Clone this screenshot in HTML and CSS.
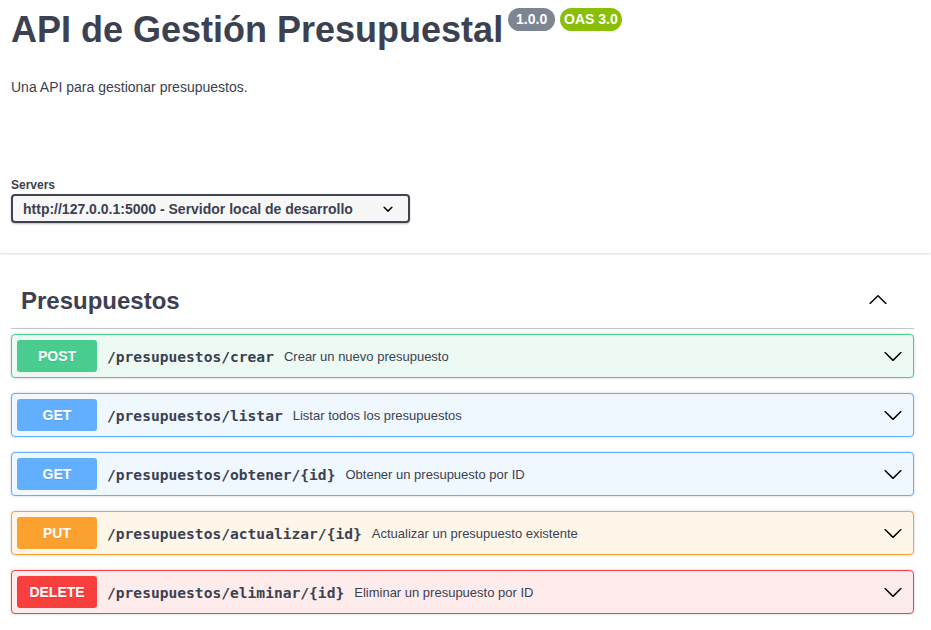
FILE: index.html
```html
<!DOCTYPE html>
<html lang="es">
<head>
<meta charset="utf-8">
<title>API de Gestión Presupuestal</title>
<link rel="stylesheet" href="styles.css">
</head>
<body>
<div class="wrapper info">
  <div class="title-row">
    <h2 class="title">API de Gestión Presupuestal</h2>
    <span class="badge badge-version"> 1.0.0 </span>
    <span class="badge badge-oas">OAS 3.0</span>
  </div>
  <p class="desc">Una API para gestionar presupuestos.</p>
</div>

<div class="scheme">
  <div class="wrapper">
    <div class="servers-label">Servers</div>
    <div class="select">
      <span class="select-text">http://127.0.0.1:5000 - Servidor local de desarrollo</span>
      <svg class="select-arrow" width="20" height="20" viewBox="0 0 20 20"><path d="M13.418 7.859a.695.695 0 01.978 0 .68.68 0 010 .969l-3.908 3.83a.697.697 0 01-.979 0l-3.908-3.83a.68.68 0 010-.969.695.695 0 01.978 0L10 11l3.418-3.141z"/></svg>
    </div>
  </div>
</div>

<div class="wrapper section">
  <div class="tag">
    <h3 class="tag-title">Presupuestos</h3>
    <svg class="tag-arrow" width="20" height="20" viewBox="0 0 20 20"><path d="M17.418 14.908c.287.27.75.27 1.037 0 .286-.27.286-.71 0-.98L10.51 6.203c-.286-.27-.75-.27-1.037 0L1.546 13.928c-.286.27-.286.71 0 .98s.75.27 1.037 0L10 7.83l7.418 7.078z"/></svg>
  </div>

  <div class="opblock post">
    <span class="method">POST</span>
    <span class="path">/presupuestos/crear</span>
    <span class="summary">Crear un nuevo presupuesto</span>
    <svg class="op-arrow" width="20" height="20" viewBox="0 0 20 20"><path d="M17.418 6.109c.272-.268.709-.268.979 0s.271.701 0 .969l-7.908 7.83c-.27.268-.707.268-.979 0l-7.908-7.83c-.27-.268-.27-.701 0-.969.271-.268.709-.268.979 0L10 13.25l7.418-7.141z"/></svg>
  </div>

  <div class="opblock get">
    <span class="method">GET</span>
    <span class="path">/presupuestos/listar</span>
    <span class="summary">Listar todos los presupuestos</span>
    <svg class="op-arrow" width="20" height="20" viewBox="0 0 20 20"><path d="M17.418 6.109c.272-.268.709-.268.979 0s.271.701 0 .969l-7.908 7.83c-.27.268-.707.268-.979 0l-7.908-7.83c-.27-.268-.27-.701 0-.969.271-.268.709-.268.979 0L10 13.25l7.418-7.141z"/></svg>
  </div>

  <div class="opblock get">
    <span class="method">GET</span>
    <span class="path">/presupuestos/obtener/{id}</span>
    <span class="summary">Obtener un presupuesto por ID</span>
    <svg class="op-arrow" width="20" height="20" viewBox="0 0 20 20"><path d="M17.418 6.109c.272-.268.709-.268.979 0s.271.701 0 .969l-7.908 7.83c-.27.268-.707.268-.979 0l-7.908-7.83c-.27-.268-.27-.701 0-.969.271-.268.709-.268.979 0L10 13.25l7.418-7.141z"/></svg>
  </div>

  <div class="opblock put">
    <span class="method">PUT</span>
    <span class="path">/presupuestos/actualizar/{id}</span>
    <span class="summary">Actualizar un presupuesto existente</span>
    <svg class="op-arrow" width="20" height="20" viewBox="0 0 20 20"><path d="M17.418 6.109c.272-.268.709-.268.979 0s.271.701 0 .969l-7.908 7.83c-.27.268-.707.268-.979 0l-7.908-7.83c-.27-.268-.27-.701 0-.969.271-.268.709-.268.979 0L10 13.25l7.418-7.141z"/></svg>
  </div>

  <div class="opblock delete">
    <span class="method">DELETE</span>
    <span class="path">/presupuestos/eliminar/{id}</span>
    <span class="summary">Eliminar un presupuesto por ID</span>
    <svg class="op-arrow" width="20" height="20" viewBox="0 0 20 20"><path d="M17.418 6.109c.272-.268.709-.268.979 0s.271.701 0 .969l-7.908 7.83c-.27.268-.707.268-.979 0l-7.908-7.83c-.27-.268-.27-.701 0-.969.271-.268.709-.268.979 0L10 13.25l7.418-7.141z"/></svg>
  </div>
</div>
</body>
</html>
```

FILE: styles.css
```css
* { box-sizing: border-box; }

body {
  margin: 0;
  font-family: "Liberation Sans", Arial, sans-serif;
  color: #3b4151;
  background: #fff;
}

.wrapper {
  width: 903px;
  margin-left: 11px;
}

/* Info */
.info {
  margin-bottom: 53px;
}

.title-row {
  display: flex;
  align-items: flex-start;
  padding-top: 8px;
}

.title {
  margin: 2px 0 0 0;
  font-size: 36px;
  line-height: 40px;
  font-weight: 700;
  color: #3b4151;
}

.badge {
  margin-left: 5px;
  padding: 3px 4px;
  border-radius: 57px;
  color: #fff;
  font-size: 14px;
  line-height: 17px;
  font-weight: 700;
  white-space: pre;
}

.badge-version { background: #7d8492; }
.badge-oas { background: #89bf04; }

.desc {
  margin: 29px 0 0 0;
  font-size: 14px;
  line-height: 16px;
}

/* Servers */
.scheme {
  background: #fff;
  padding: 30px 0;
  box-shadow: 0 1px 2px 0 rgba(0, 0, 0, 0.15);
}

.servers-label {
  font-size: 12px;
  line-height: 14px;
  font-weight: 700;
  margin-bottom: 2px;
}

.select {
  display: flex;
  align-items: center;
  width: 399px;
  height: 29px;
  padding: 0 10px;
  background: #f7f7f7;
  border: 2px solid #41444e;
  border-radius: 4px;
  box-shadow: 0 1px 2px 0 rgba(0, 0, 0, 0.25);
  font-size: 14px;
  font-weight: 700;
  color: #3b4151;
}

.select-text { flex: 1; white-space: nowrap; }

.select-arrow { flex: none; fill: #000; }

/* Section */
.section { margin-top: 21px; }

.tag {
  display: flex;
  align-items: center;
  height: 55px;
  padding: 10px 20px 10px 10px;
  border-bottom: 1px solid rgba(59, 65, 81, 0.3);
  margin-bottom: 5px;
}

.tag-title {
  flex: 1;
  margin: 0;
  font-size: 24px;
  font-weight: 700;
  color: #3b4151;
}

.tag-arrow {
  flex: none;
  margin: 0 6px 4px 0;
  fill: #000;
}

/* Operations */
.opblock {
  display: flex;
  align-items: center;
  height: 44px;
  padding: 5px;
  margin-bottom: 15px;
  border: 1px solid;
  border-radius: 4px;
  box-shadow: 0 0 3px rgba(0, 0, 0, 0.19);
}

.method {
  flex: none;
  width: 80px;
  height: 32px;
  line-height: 32px;
  text-align: center;
  border-radius: 3px;
  color: #fff;
  font-size: 14px;
  font-weight: 700;
  text-shadow: 0 1px 0 rgba(0, 0, 0, 0.1);
}

.path {
  padding: 0 10px;
  font-family: "DejaVu Sans Mono", "Liberation Mono", monospace;
  font-size: 14.6px;
  font-weight: 700;
  color: #3b4151;
  white-space: nowrap;
}

.summary {
  flex: 1;
  font-size: 13px;
  color: #3b4151;
  white-space: nowrap;
}

.op-arrow {
  flex: none;
  margin-right: 5px;
  fill: #000;
}

.post { background: #edfaf4; border-color: #49cc90; }
.post .method { background: #49cc90; }

.get { background: #eff7ff; border-color: #61affe; }
.get .method { background: #61affe; }

.put { background: #fff6ea; border-color: #fca130; }
.put .method { background: #fca130; }

.delete { background: #feecec; border-color: #f93e3e; }
.delete .method { background: #f93e3e; }
```
